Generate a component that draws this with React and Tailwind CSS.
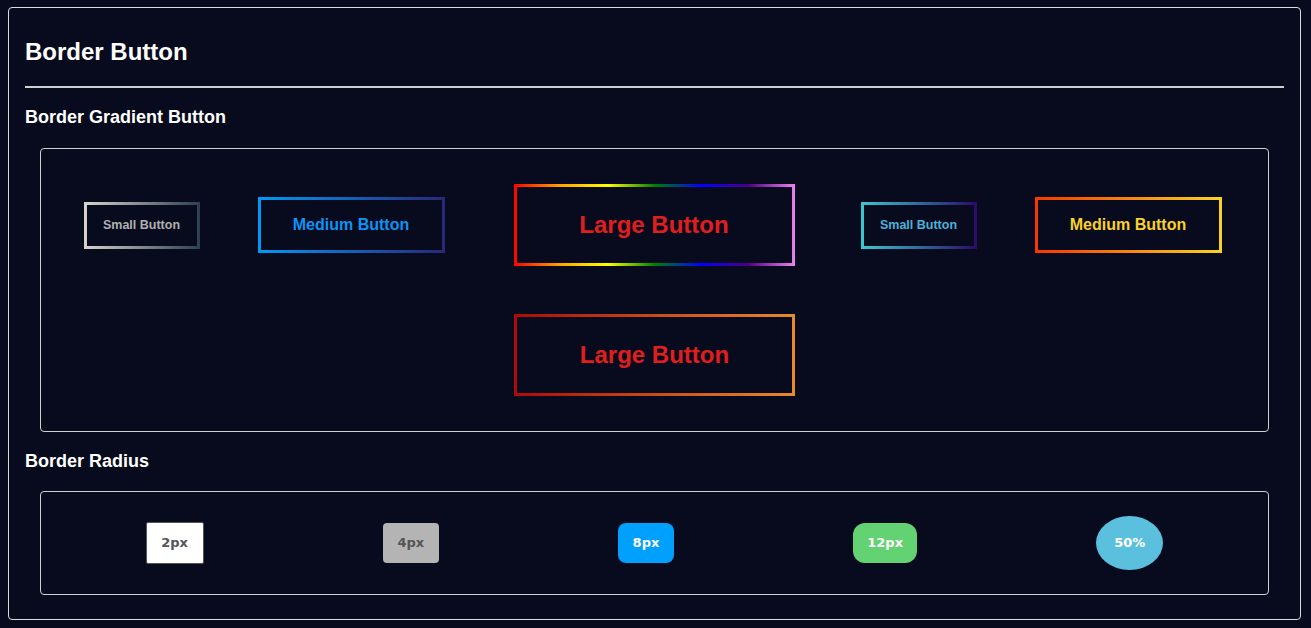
const GradientButton = ({ gradient, text, size, className = "" }) => {
  const sizes = {
    small: "w-[110px] h-[41px] text-[12.5px]",
    medium: "w-[181px] h-[50px] text-base",
    large: "w-[275px] h-[76px] text-2xl",
  };
  return (
    <div className={`p-[3px] ${gradient} ${className}`}>
      <button className={`flex items-center justify-center font-bold bg-[#080b1d] ${sizes[size]} ${text}`}>
        {size === "large" ? "Large Button" : size === "medium" ? "Medium Button" : "Small Button"}
      </button>
    </div>
  );
};

const radii = [
  { label: "2px", cls: "w-[58px] h-[42px] rounded-[2px] bg-white border border-[#555] text-[#555]" },
  { label: "4px", cls: "w-14 h-10 rounded-[4px] bg-[#b4b4b4] text-[#555]" },
  { label: "8px", cls: "w-14 h-10 rounded-[8px] bg-[#00a0ff] text-white" },
  { label: "12px", cls: "w-16 h-10 rounded-[12px] bg-[#62d273] text-white" },
  { label: "50%", cls: "w-[67px] h-[54px] rounded-[50%] bg-[#5bc0de] text-white" },
];

export default function App() {
  return (
    <div className="min-h-[628px] bg-[#080b1d] pt-[7px] pl-2 font-['Liberation_Sans',Arial,sans-serif] text-white">
      <div className="w-[1293px] h-[613px] border border-[#dcdcdc] rounded-[4px] px-4 pt-[29px]">
        <h1 className="text-2xl font-bold leading-[29px]">Border Button</h1>
        <div className="mt-[20px] h-[2px] bg-[#cfcfcf]" />

        <h2 className="mt-[18px] text-lg font-bold leading-[22px]">Border Gradient Button</h2>
        <div className="mt-[20px] mx-[15px] border border-[#cfcfcf] rounded-[4px] py-[35px] flex flex-col gap-[48px]">
          <div className="flex justify-center items-center pr-[4px]">
            <GradientButton
              size="small"
              gradient="bg-[linear-gradient(to_right,#d8d4cc,#2c3e50)]"
              text="text-[#b0b0b0]"
            />
            <GradientButton
              size="medium"
              className="ml-[58px]"
              gradient="bg-[linear-gradient(to_right,#0199f7,#2a2777)]"
              text="text-[#0c94f5]"
            />
            <GradientButton
              size="large"
              className="ml-[69px]"
              gradient="bg-[linear-gradient(to_right,red,orange,yellow,green,blue,indigo,violet)]"
              text="text-[#e01e1e]"
            />
            <GradientButton
              size="small"
              className="ml-[66px]"
              gradient="bg-[linear-gradient(to_right,#3ac9cf,#2b0a6b)]"
              text="text-[#4ab2da]"
            />
            <GradientButton
              size="medium"
              className="ml-[58px]"
              gradient="bg-[linear-gradient(to_right,#f83600,#f9d423)]"
              text="text-[#fbd12b]"
            />
          </div>
          <div className="flex justify-center">
            <GradientButton
              size="large"
              gradient="bg-[linear-gradient(to_right,#ae0a0a,#e68b2a)]"
              text="text-[#e01e1e]"
            />
          </div>
        </div>

        <h2 className="mt-[18px] text-lg font-bold leading-[22px]">Border Radius</h2>
        <div className="mt-[19px] mx-[15px] border border-[#cfcfcf] rounded-[4px] py-6 px-[15px] flex justify-around items-center">
          {radii.map((r) => (
            <button
              key={r.label}
              className={`flex items-center justify-center font-bold text-[13px] font-['DejaVu_Sans',Verdana,sans-serif] ${r.cls}`}
            >
              {r.label}
            </button>
          ))}
        </div>
      </div>
    </div>
  );
}
